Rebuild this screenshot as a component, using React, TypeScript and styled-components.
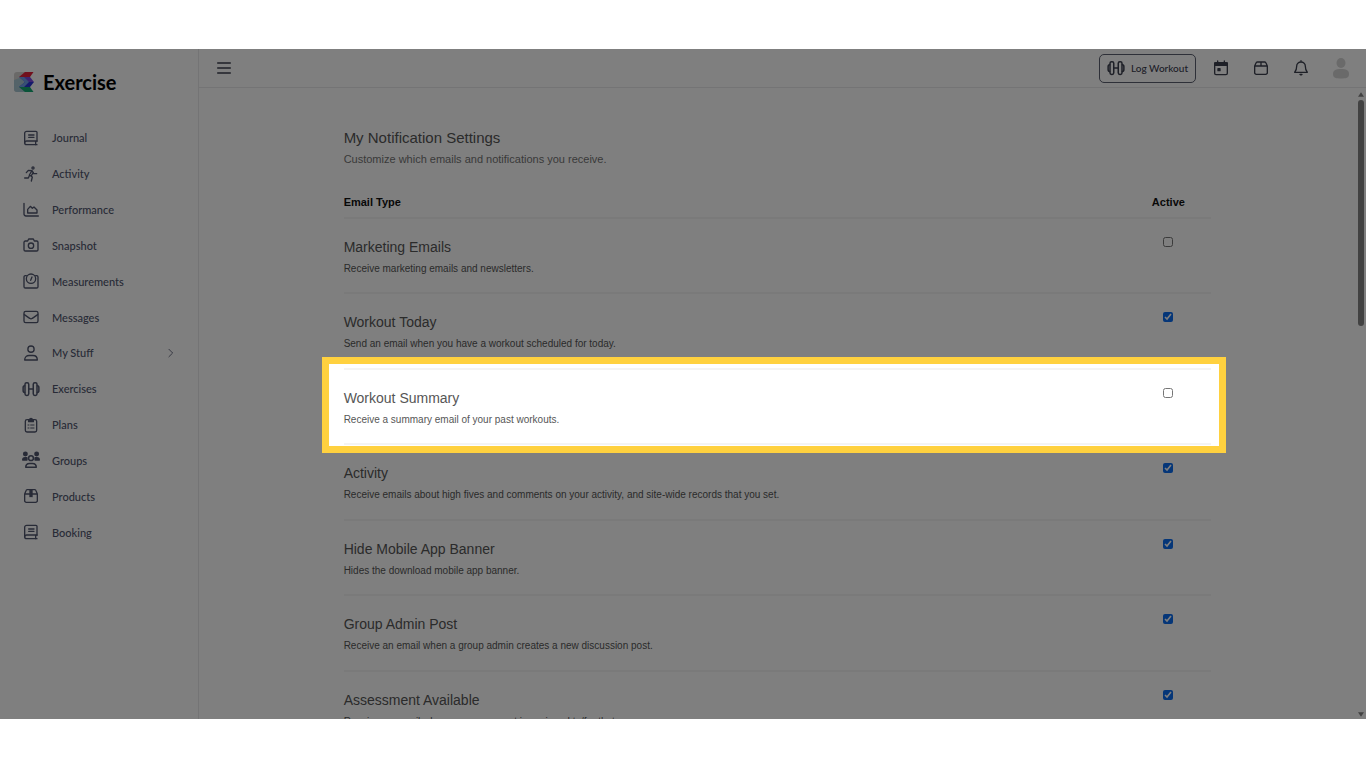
import React from "react";
import styled, { createGlobalStyle } from "styled-components";

const GlobalStyle = createGlobalStyle`
  *, *::before, *::after { box-sizing: border-box; }
  html, body, #root { height: 100%; }
  body {
    margin: 0;
    background: #fff;
    font-family: "Liberation Sans", Arial, sans-serif;
    color: #565656;
  }
  h1, p { margin: 0; }
`;

const navFont = `"Lato", "Open Sans", sans-serif`;

const Page = styled.div`
  display: flex;
  height: 100vh;
  padding: 49px 0;
`;

const Frame = styled.div`
  flex: 1;
  display: flex;
  min-width: 0;
  position: relative;
  overflow: hidden;
  background: #fff;
`;

const Sidebar = styled.aside`
  flex: 0 0 199px;
  border-right: 1px solid #e8e8ea;
  font-family: ${navFont};
`;

const Brand = styled.a`
  display: flex;
  align-items: center;
  gap: 9px;
  height: 66px;
  padding-left: 14px;
  color: #000;
  font-size: 20px;
  font-weight: 700;
  text-decoration: none;
`;

const Nav = styled.nav`
  display: grid;
  grid-auto-rows: 1fr;
  height: 430px;
  margin-top: 5px;
`;

const NavItem = styled.a`
  display: flex;
  align-items: center;
  gap: 12px;
  padding: 0 22px;
  color: #50566e;
  font-size: 11px;
  font-weight: 500;
  text-decoration: none;
`;

const IconSlot = styled.span`
  display: flex;
  justify-content: center;
  width: 18px;
`;

const NavLabel = styled.span`
  flex: 1;
`;

const Main = styled.div`
  flex: 1;
  display: flex;
  flex-direction: column;
  min-width: 0;
`;

const TopBar = styled.header`
  flex: none;
  display: flex;
  align-items: center;
  justify-content: space-between;
  height: 39px;
  padding: 0 16px;
  border-bottom: 1px solid #e8e8ea;
`;

const Actions = styled.div`
  display: flex;
  align-items: center;
  gap: 22px;
`;

const IconButton = styled.button`
  display: flex;
  justify-content: center;
  width: 18px;
  padding: 0;
  border: 0;
  background: none;
  color: #3c404f;
`;

const LogButton = styled.button`
  display: flex;
  align-items: center;
  justify-content: center;
  gap: 6px;
  width: 97px;
  height: 29px;
  margin-right: -6px;
  padding: 0;
  border: 1px solid #5c6070;
  border-radius: 5px;
  background: none;
  color: #3c404f;
  font-family: ${navFont};
  font-size: 10px;
  font-weight: 500;
`;

const Body = styled.div`
  flex: 1;
  display: flex;
  min-height: 0;
`;

const Content = styled.main`
  flex: 1;
  display: flex;
  flex-direction: column;
  align-items: center;
  height: 0;
`;

const Panel = styled.section`
  width: 75%;
  padding-top: 40px;
`;

const Title = styled.h1`
  font-size: 15px;
  font-weight: 400;
  line-height: 20px;
`;

const Subtitle = styled.p`
  margin-top: 1px;
  color: #747474;
  font-size: 11px;
  line-height: 20px;
`;

const Table = styled.table`
  width: 100%;
  margin-top: 17px;
  border-collapse: separate;
  border-spacing: 0;
`;

const HeadCell = styled.th<{ $center?: boolean }>`
  height: 33px;
  padding: 0;
  border-bottom: 2px solid #f4f4f4;
  color: #111;
  font-size: 11px;
  line-height: 20px;
  text-align: ${(p) => (p.$center ? "center" : "left")};
`;

const Row = styled.tr<{ $raised?: boolean }>`
  position: ${(p) => (p.$raised ? "relative" : "static")};
  z-index: 1;
  height: 75px;
  &:nth-child(even) { height: 76px; }
`;

const Cell = styled.td<{ $center?: boolean }>`
  width: ${(p) => (p.$center ? "86px" : "auto")};
  padding: 18px 0 0;
  border-bottom: 2px solid #f4f4f4;
  text-align: ${(p) => (p.$center ? "center" : "left")};
  vertical-align: top;
`;

const RowLabel = styled.label`
  display: block;
  font-size: 14px;
  line-height: 20px;
`;

const RowText = styled.p`
  margin-top: 4px;
  font-size: 10px;
  line-height: 16px;
`;

const Check = styled.input`
  display: inline-block;
  width: 10px;
  height: 10px;
  margin: 0;
  vertical-align: top;
  accent-color: #0a6cf0;
`;

const Spotlight = styled.span`
  position: absolute;
  inset: -13px -15px -8px -22px;
  border: 7px solid #ffd13f;
  box-shadow: 0 0 0 2000px rgba(0, 0, 0, 0.5);
  pointer-events: none;
`;

const ScrollTrack = styled.div`
  flex: 0 0 10px;
  display: flex;
  flex-direction: column;
  align-items: center;
  padding: 4px 0 2px;
  gap: 3px;
`;

const ScrollThumb = styled.div`
  width: 6px;
  height: 226px;
  margin-bottom: auto;
  border-radius: 3px;
  background: #858585;
`;

const paths: Record<string, React.ReactNode> = {
  book: (
    <>
      <path d="M21 17V3.500A1.500 1.500 0 0 0 19.500 2H5.500A3 3 0 0 0 2.500 5v14a3 3 0 0 0 3 3H21" />
      <path d="M2.500 19a3 3 0 0 1 3-2.500H21M19 17v5M8.500 7.500h8M8.500 11h8" />
    </>
  ),
  run: (
    <>
      <circle cx="15" cy="3" r="1.600" />
      <path d="M5 10 8 6.500l5.500.5-4 6.500 4.500 3-1.500 6M13.500 7l2.500 4.500h4.500M9.500 14.500 8 18H2.500M15.500 9.500l-3 5" />
    </>
  ),
  chart: (
    <>
      <path d="M1.500 2v15.500A3 3 0 0 0 4.500 21H23" />
      <path d="M7 16.500v-5.500l4-4.500 3 3 2.500-2 4.500 4.500v4.500z" />
    </>
  ),
  camera: (
    <>
      <path d="M1.500 8a2 2 0 0 1 2-2h3.500l1.500-3h7L17 6h3.500a2 2 0 0 1 2 2v11a2 2 0 0 1-2 2h-17a2 2 0 0 1-2-2z" />
      <circle cx="12" cy="13" r="4" />
    </>
  ),
  scale: (
    <>
      <path d="M5 4H3.500a2 2 0 0 0-2 2v14.500a2 2 0 0 0 2 2h17a2 2 0 0 0 2-2V6a2 2 0 0 0-2-2H19" />
      <circle cx="12" cy="8.500" r="7" />
      <path d="m11.500 11 2-5" />
    </>
  ),
  mail: (
    <>
      <rect x="1.500" y="3.500" width="21" height="17" rx="2.500" />
      <path d="m2 8.500 8 5.500a3.400 3.400 0 0 0 4 0l8-5.500" />
    </>
  ),
  user: (
    <>
      <circle cx="12" cy="6.200" r="4.700" />
      <path d="M2.500 22.500c0-4.500 3-6.800 6.500-6.800h6c3.500 0 6.500 2.300 6.500 6.800z" />
    </>
  ),
  dumbbell: (
    <>
      <rect x="4" y="3.500" width="5" height="17" rx="2.200" />
      <rect x="15" y="3.500" width="5" height="17" rx="2.200" />
      <path d="M9 12h6M3.500 7.500C1.500 7.500 1.500 9 1.500 10v4c0 1 0 2.500 2 2.500M20.500 7.500c2 0 2 1.500 2 2.500v4c0 1 0 2.500-2 2.500" />
    </>
  ),
  clipboard: (
    <>
      <rect x="3.500" y="4" width="17" height="18.500" rx="2.500" />
      <path d="M8.500 4v3h7V4H14a2 2 0 0 0-4 0z" fill="currentColor" />
      <path d="M7.500 12h1.500M11.500 12h5M7.500 16.500h1.500M11.500 16.500h5" strokeWidth="1.500" />
    </>
  ),
  groups: (
    <>
      <circle cx="4.500" cy="4" r="2.300" fill="currentColor" />
      <circle cx="19.500" cy="4" r="2.300" fill="currentColor" />
      <path d="M1 12c0-2 1-3 3-3h2.500v3zM23 12c0-2-1-3-3-3h-2.500v3z" fill="currentColor" />
      <circle cx="12" cy="9.500" r="3.200" />
      <path d="M5 21.500c0-3 2-5 5-5h4c3 0 5 2 5 5z" />
    </>
  ),
  box: (
    <>
      <path d="M2.500 9 4.500 4a2 2 0 0 1 1.800-1.500h11.400A2 2 0 0 1 19.500 4l2 5v10a2.500 2.500 0 0 1-2.500 2.500H5A2.500 2.500 0 0 1 2.500 19zM2.500 9h19" />
      <path d="M10.500 3h3v10L12 12l-1.500 1z" fill="currentColor" />
    </>
  ),
  menu: <path d="M2.500 4.500h19M2.500 12h19M2.500 19.500h19" />,
  calendar: (
    <>
      <rect x="2.500" y="4" width="19" height="18" rx="2" />
      <path d="M2.500 4.500h19V8h-19z" fill="currentColor" />
      <path d="M7 1.500V4M17 1.500V4" />
      <path d="M7.500 13h3v3h-3z" fill="currentColor" />
    </>
  ),
  parcel: (
    <path d="M2.500 9 4.500 4.500a2 2 0 0 1 2-1.500h11a2 2 0 0 1 2 1.500l2 4.500v10a2.500 2.500 0 0 1-2.500 2.500H5A2.500 2.500 0 0 1 2.500 19zM2.500 9h19M12 3v6" />
  ),
  bell: (
    <>
      <path d="M12 1v2M2.500 18.500h19C19 16 18.500 14 18.500 9.500a6.500 6.500 0 0 0-13 0c0 4.500-.5 6.500-3 9z" />
      <path d="M10.500 21.500h3L12 22.500z" fill="currentColor" />
    </>
  ),
  chevron: <path d="m7 3 9 9-9 9" />,
};

function Icon({ name, size = 16 }: { name: string; size?: number }) {
  return (
    <svg
      width={size}
      height={size}
      viewBox="0 0 24 24"
      fill="none"
      stroke="currentColor"
      strokeWidth="2"
      strokeLinecap="round"
      strokeLinejoin="round"
      aria-hidden="true"
    >
      {paths[name]}
    </svg>
  );
}

function Logo() {
  return (
    <svg width="20" height="20" viewBox="0 0 20 20" aria-hidden="true">
      <path d="M3 0h9L6 5l6 5-6 5 6 5H3a3 3 0 0 1-3-3V3a3 3 0 0 1 3-3z" fill="#d5d2d0" />
      <path d="M0 8l8-3 4 5-4 5 4 5H3a3 3 0 0 1-3-3z" fill="#a9c6d2" />
      <path d="M11 0h8.500L16 5H5z" fill="#e3203a" />
      <path d="M5 5h11l4 5h-9z" fill="#7a4be0" />
      <path d="M11 10h9l-4 5H5z" fill="#2b34d6" />
      <path d="M5 15h11l3.500 5H11z" fill="#14a873" />
      <path d="M5 5h5l5 5-5 5H5l6-5z" fill="#6fa0ea" />
    </svg>
  );
}

const navItems: { label: string; icon: string; size?: number; nested?: boolean }[] = [
  { label: "Journal", icon: "book" },
  { label: "Activity", icon: "run" },
  { label: "Performance", icon: "chart" },
  { label: "Snapshot", icon: "camera" },
  { label: "Measurements", icon: "scale" },
  { label: "Messages", icon: "mail" },
  { label: "My Stuff", icon: "user", nested: true },
  { label: "Exercises", icon: "dumbbell", size: 18 },
  { label: "Plans", icon: "clipboard" },
  { label: "Groups", icon: "groups", size: 18 },
  { label: "Products", icon: "box" },
  { label: "Booking", icon: "book" },
];

const settings = [
  { id: "marketing", title: "Marketing Emails", text: "Receive marketing emails and newsletters.", on: false },
  { id: "today", title: "Workout Today", text: "Send an email when you have a workout scheduled for today.", on: true },
  { id: "summary", title: "Workout Summary", text: "Receive a summary email of your past workouts.", on: false, spotlight: true },
  { id: "activity", title: "Activity", text: "Receive emails about high fives and comments on your activity, and site-wide records that you set.", on: true },
  { id: "banner", title: "Hide Mobile App Banner", text: "Hides the download mobile app banner.", on: true },
  { id: "group", title: "Group Admin Post", text: "Receive an email when a group admin creates a new discussion post.", on: true },
  { id: "assessment", title: "Assessment Available", text: "Receive an email when an assessment is assigned to/for that", on: true },
];

export default function App() {
  return (
    <>
      <GlobalStyle />
      <Page>
        <Frame>
          <Sidebar>
            <Brand href="#home">
              <Logo />
              Exercise
            </Brand>
            <Nav aria-label="Main">
              {navItems.map(({ label, icon, size, nested }) => (
                <NavItem key={label} href={`#${label}`}>
                  <IconSlot>
                    <Icon name={icon} size={size} />
                  </IconSlot>
                  <NavLabel>{label}</NavLabel>
                  {nested && <Icon name="chevron" size={10} />}
                </NavItem>
              ))}
            </Nav>
          </Sidebar>
          <Main>
            <TopBar>
              <IconButton aria-label="Toggle menu">
                <Icon name="menu" />
              </IconButton>
              <Actions>
                <LogButton>
                  <Icon name="dumbbell" size={18} />
                  Log Workout
                </LogButton>
                <IconButton aria-label="Calendar"><Icon name="calendar" /></IconButton>
                <IconButton aria-label="Store"><Icon name="parcel" /></IconButton>
                <IconButton aria-label="Notifications"><Icon name="bell" /></IconButton>
                <IconButton aria-label="Account">
                  <svg width="18" height="22" viewBox="0 0 18 22" fill="#d4d4d4" aria-hidden="true">
                    <ellipse cx="9" cy="6" rx="4.500" ry="5" />
                    <path d="M1 17c0-4 3-5 8-5s8 1 8 5-3 4.500-8 4.500S1 21 1 17z" />
                  </svg>
                </IconButton>
              </Actions>
            </TopBar>
            <Body>
              <Content>
                <Panel>
                  <Title>My Notification Settings</Title>
                  <Subtitle>Customize which emails and notifications you receive.</Subtitle>
                  <Table>
                    <thead>
                      <tr>
                        <HeadCell scope="col">Email Type</HeadCell>
                        <HeadCell scope="col" $center>Active</HeadCell>
                      </tr>
                    </thead>
                    <tbody>
                      {settings.map((s) => (
                        <Row key={s.id} $raised={s.spotlight}>
                          <Cell>
                            <RowLabel htmlFor={s.id}>{s.title}</RowLabel>
                            <RowText>{s.text}</RowText>
                            {s.spotlight && <Spotlight />}
                          </Cell>
                          <Cell $center>
                            <Check id={s.id} type="checkbox" defaultChecked={s.on} />
                          </Cell>
                        </Row>
                      ))}
                    </tbody>
                  </Table>
                </Panel>
              </Content>
              <ScrollTrack aria-hidden="true">
                <svg width="6" height="5" viewBox="0 0 7 5" fill="#858585"><path d="M3.500 0 7 5H0z" /></svg>
                <ScrollThumb />
                <svg width="6" height="5" viewBox="0 0 7 5" fill="#858585"><path d="M0 0h7L3.500 5z" /></svg>
              </ScrollTrack>
            </Body>
          </Main>
        </Frame>
      </Page>
    </>
  );
}
